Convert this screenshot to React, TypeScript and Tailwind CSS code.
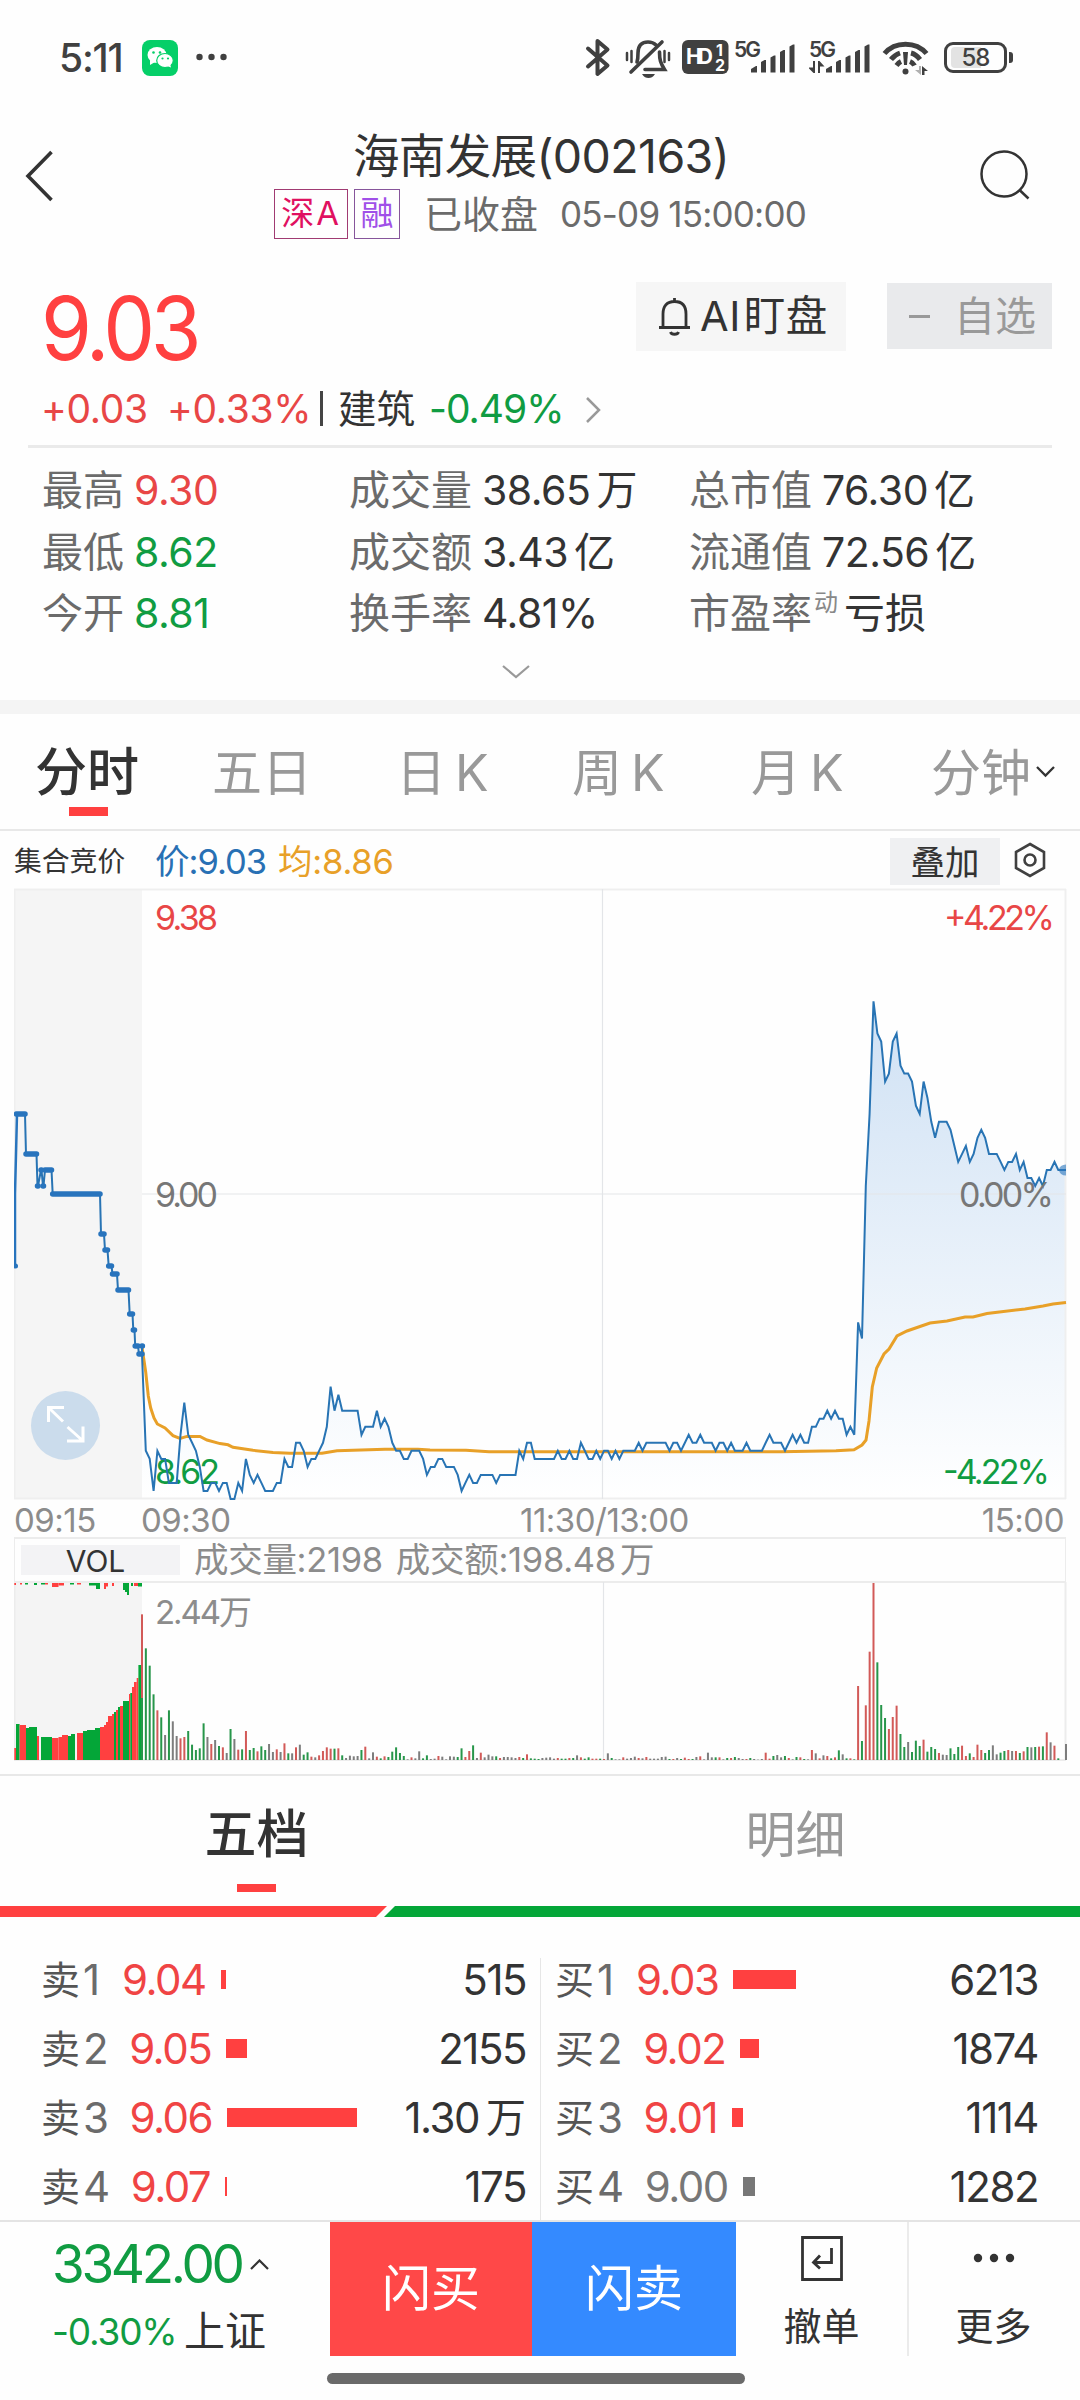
import React from 'react';

const RED = '#ff4040';
const GREEN = '#04a638';
const GRAY = '#777777';

// price per minute, in cents above the lower bound 8.62
const PRICES = [
  18, 6, 5, 1, 6, 5, 5, 2, 2, 2, 8, 12, 8, 7, 6, 4, 1, 1, 2, 2, 1, 2, 2, 0, 0, 2, 1, 5, 3, 2,
  3, 2, 1, 1, 1, 2, 2, 5, 4, 4, 7, 7, 6, 4, 5, 5, 6, 7, 9, 14, 11, 13, 11, 11, 11, 11, 11, 8, 9, 9,
  9, 11, 9, 10, 9, 7, 6, 6, 5, 5, 6, 6, 6, 5, 3, 4, 4, 5, 5, 4, 4, 4, 3, 1, 2, 3, 2, 2, 3, 3,
  3, 3, 2, 3, 3, 3, 3, 3, 6, 5, 7, 7, 5, 5, 5, 5, 5, 5, 6, 5, 5, 6, 5, 5, 7, 6, 5, 5, 6, 5,
  6, 6, 5, 6, 5, 6, 6, 6, 6, 7, 6, 7, 7, 7, 7, 7, 7, 6, 7, 7, 6, 7, 8, 7, 7, 8, 7, 7, 7, 6,
  7, 7, 6, 7, 6, 6, 6, 7, 6, 6, 6, 6, 7, 8, 7, 7, 7, 6, 7, 8, 7, 8, 7, 7, 9, 9, 10, 10, 11, 10,
  11, 10, 10, 8, 9, 8, 22, 20, 39, 48, 62, 58, 57, 52, 53, 57, 58, 54, 53, 53, 52, 49, 48, 52, 50, 47, 45, 47, 47, 47,
  46, 44, 42, 43, 44, 42, 43, 45, 46, 45, 43, 43, 43, 42, 41, 42, 42, 43, 41, 42, 40, 40, 39, 40, 39, 41, 41, 42, 41, 41, 41,
];

const AVERAGE =
  '142,1347 145.7,1372 148.3,1396 150.7,1408 154,1418 157.3,1424 165,1428 173,1435.6 180,1438.5 187,1436.4 200,1436.4 207,1440 220,1443.6 228,1444.8 233,1447.3 253,1450.3 273,1452.4 290,1453.2 322,1453.2 337,1450.7 385,1449.3 418,1449.3 430,1450 466,1450.3 489,1451.7 781,1451.7 836,1450.7 854,1449.7 862,1445 866,1440 869,1421 872.3,1387 876.7,1368 884,1354 889,1349 897,1336 907,1331 930,1323 947,1321 965,1317 973,1317 987,1313.5 1025,1309 1043,1306 1053,1304 1066,1302.5';

// call auction levels: [x start, x end, y]
const AUCTION: [number, number, number][] = [
  [16.5, 25, 1114],
  [26, 36.5, 1154],
  [37.5, 38, 1186],
  [41, 41.5, 1170],
  [43, 43.5, 1186],
  [45, 51.5, 1170],
  [52.7, 100, 1194],
  [101, 104, 1234],
  [105, 107.5, 1250],
  [108.7, 111.5, 1266],
  [112.5, 117, 1274],
  [118, 128.5, 1290],
  [129.7, 132.5, 1314],
  [133.3, 134.5, 1330],
  [135.2, 138, 1346],
  [139, 142, 1354],
  [142, 142.4, 1346],
];

// r = up, g = down, k = flat; number is the bar height in thirds of a pixel
const VOLUMES =
  'r437 g335 g283 g197 r149 g128 k75 g149 k116 k72 r65 r69 g87 g46 g30 g35 g110 k69 r48 k60 g42 r38 k21 g93 k63 r31 g32 r87 g30 g36 ' +
  'r26 g41 g30 k48 k24 r32 k24 r50 g20 k20 r38 k46 g16 g23 r10 k8 r14 r27 r38 r34 g34 r35 g14 k6 k13 k11 k12 g30 r40 k5 ' +
  'k23 r10 g5 r11 g9 g25 g38 g21 g12 k2 r8 k5 k26 g5 g14 k3 k4 r12 k10 k2 k11 k10 g9 g35 r9 r27 g44 k6 r22 k8 ' +
  'k16 k11 g11 r6 k9 k9 k8 k6 r9 g6 r17 g5 g4 g3 k6 k7 k8 k4 r6 g4 g4 r6 g6 k14 r8 g4 g8 r4 r4 g4 ' +
  'r3 k20 g6 k2 k2 r8 k4 k6 k10 r6 k5 r9 k4 k4 k4 k9 k10 g3 r3 k6 g3 r7 r3 g3 k9 r11 k2 k22 k8 g8 ' +
  'r8 k2 g6 r6 g9 k6 k3 r3 g6 k3 k1 k3 r22 r4 g12 k15 k8 g12 r6 k2 g9 r8 g3 k2 r30 k20 r5 k14 r12 g5 ' +
  'r8 g29 k17 g5 r5 g2 r222 g57 r164 r325 r531 g293 g165 g126 r93 r129 r163 g78 g39 k54 g24 g58 g42 r61 g25 g39 g33 r21 k16 k15 ' +
  'g35 g18 g39 r43 r12 g20 r9 r46 r30 g21 g30 k44 k17 g22 g27 r30 k27 r27 g21 r26 g39 k38 g39 r40 g41 r83 k53 r43 g5 k0 k48';

// [x start, x end, colour, height] of the call auction histogram
const AUCTION_VOL: [number, number, string, number][] = [
  [14.3, 16, 'r', 12], [16, 19.6, 'g', 36], [19.6, 26, 'r', 35], [26, 29, 'g', 32], [29, 37, 'g', 33], [37, 39, 'r', 24],
  [41, 45, 'g', 23], [45, 52, 'g', 23], [52, 58.5, 'r', 22], [58.5, 62, 'r', 23], [62, 68, 'r', 25], [68, 71, 'g', 24],
  [71, 75, 'g', 26], [77, 83, 'r', 27], [83, 87, 'g', 29], [87, 95, 'g', 30], [95, 100, 'g', 32], [100, 104, 'r', 33],
  [104, 106, 'r', 35], [106, 108, 'r', 38], [108, 112, 'r', 44], [112, 114, 'r', 46], [114, 116, 'g', 48], [116, 118, 'r', 50],
  [118, 120, 'g', 53], [120, 123, 'r', 54], [123, 129, 'g', 59], [129, 130.3, 'r', 66], [130.3, 132, 'g', 67], [132, 134, 'r', 73],
  [134, 136.7, 'r', 78], [136.7, 138.4, 'r', 82], [138.4, 141, 'g', 95],
];

const AUCTION_TOP: [number, number, string, number][] = [
  [14.3, 16, 'r', 2], [20, 22, 'r', 1.5], [25, 28, 'g', 1.5], [34, 37, 'g', 2], [41, 45, 'g', 1.5], [45, 48, 'r', 1.5],
  [52, 58.5, 'r', 4], [58.5, 64, 'r', 2.5], [70, 74, 'g', 1.5], [77, 81, 'r', 1.5], [89, 96, 'g', 2.5], [96, 100, 'g', 6],
  [104, 106, 'r', 6], [106, 108, 'r', 3.5], [112, 114, 'r', 3], [123, 125, 'g', 7], [125, 127, 'g', 9], [127, 129, 'g', 12],
  [131, 133, 'g', 3], [134, 138, 'r', 3], [138, 142, 'g', 3.5],
];

const minuteX = (i: number) => 142 + i * 3.85;
const priceY = (cents: number) => 1499 - cents * 8.026;

const volColor = (c: string) => (c === 'r' ? '#d25a58' : c === 'g' ? '#27964a' : '#7d7d7d');
const solidColor = (c: string) => (c === 'r' ? RED : GREEN);

const Signal: React.FC<{ arrows?: boolean }> = ({ arrows }) => (
  <svg width="62" height="40" viewBox="0 0 62 40" fill="#404040">
    <text x="0" y="19" fontSize="21" fontWeight="600" textLength="27" fontFamily="Inter">5G</text>
    <path d="M17 34.5V31l5-3h1v6.5z" />
    <path d="M27 34.5V24l3.5-2h1.5v12.5z" />
    <path d="M36.500 34.500V19.500l3.500-2h1.500v17z" />
    <path d="M46 34.500V14l3.500-2H51v22.500z" />
    <path d="M55.500 34.500V8.500L59 6.500h1.500v28z" />
    {arrows && <path d="M4 23h2v12H4.500L-1 29.500h5zM9 35V23h1.500l5 5.500H11V35z" />}
  </svg>
);

const StatusBar: React.FC = () => (
  <div className="flex h-[112px] items-start pt-[38px] pl-[59px] text-[#404040]">
    <span className="w-[83px] pt-px text-[39px] leading-[38px] font-medium tracking-[-1.200px]">5:11</span>
    <svg width="36" height="38" viewBox="0 0 36 38">
      <rect y="2" width="36" height="36" rx="8" fill="#05cf68" />
      <ellipse cx="15" cy="17" rx="9.500" ry="8" fill="#fff" />
      <path d="M8 22l0 5 5-3z" fill="#fff" />
      <ellipse cx="23" cy="22.500" rx="8.300" ry="7" fill="#fff" stroke="#05cf68" strokeWidth="1.200" />
      <path d="M25 28l4 1.500-1-4z" fill="#fff" />
      <circle cx="11.500" cy="14.500" r="1.300" fill="#05cf68" />
      <circle cx="18" cy="14.500" r="1.300" fill="#05cf68" />
      <circle cx="20.500" cy="20.500" r="1.100" fill="#05cf68" />
      <circle cx="26" cy="20.500" r="1.100" fill="#05cf68" />
    </svg>
    <svg className="ml-[17px]" width="34" height="38" viewBox="0 0 34 38" fill="#404040">
      <circle cx="4.500" cy="19" r="3.200" />
      <circle cx="16.500" cy="19" r="3.200" />
      <circle cx="28.500" cy="19" r="3.200" />
    </svg>
    <div className="ml-[356px] flex">
      <svg width="26" height="40" viewBox="0 0 26 40" fill="none" stroke="#404040" strokeWidth="4" strokeLinejoin="round" strokeLinecap="round">
        <path d="M3 10.500L22.500 27.500 12.500 36V3l10 8.500L3 28.500" />
      </svg>
      <svg className="ml-[14px]" width="46" height="42" viewBox="0 0 46 42" fill="none" stroke="#404040" strokeWidth="3.600" strokeLinecap="round">
        <path d="M12 24c1-3 1-5 1-9C13 7 17 4 23 4c3 0 6 1 8 3M34.500 14c0 8 1 11 5 17.500H20" />
        <path d="M37 4L6 34" />
        <path d="M17 36h13c-2 3-4 4-6.500 4S19 39 17 36z" fill="#404040" stroke="none" />
        <path d="M2 15v7M6.500 13v11M39.500 13v11M44 15v7" strokeWidth="2.500" />
      </svg>
      <svg className="ml-[11px]" width="47" height="40" viewBox="0 0 47 40">
        <rect y="2" width="46.500" height="34" rx="6" fill="#404040" />
        <text x="4" y="26" fontSize="21" fontWeight="700" fill="#fff" textLength="27" fontFamily="Inter">HD</text>
        <text x="34" y="17.500" fontSize="16" fontWeight="700" fill="#fff" fontFamily="Inter">1</text>
        <text x="33" y="33" fontSize="16" fontWeight="700" fill="#fff" fontFamily="Inter">2</text>
      </svg>
      <div className="ml-[5px] flex"><Signal /></div>
      <div className="ml-[13px] flex"><Signal arrows /></div>
      <svg className="ml-[11px]" width="47" height="40" viewBox="0 0 47 40" fill="none" stroke="#404040">
        <path d="M2.500 15.500C13 3 34 3 44.500 15.500" strokeWidth="5" />
        <path d="M9 21.500c3-4 6-5.500 9-6.500M29 15c4 1 6.500 3 9 6.500" strokeWidth="5" />
        <path d="M14.500 27.500c1.500-2 3-3.300 4.500-4M28 23.500c2 .800 3.500 2 4.500 4" strokeWidth="5" />
        <path d="M21 14h5l-1 13h-3z" fill="#404040" stroke="none" />
        <circle cx="23.500" cy="33.500" r="3" fill="#404040" stroke="none" />
        <path d="M37 28h2v9l-6-5h4z" fill="#b0b0b0" stroke="none" />
        <path d="M40 37v-9l6 5h-3.500v4z" fill="#404040" stroke="none" />
      </svg>
      <div className="relative ml-[15px] mt-1 flex h-[31px] w-[63px] items-center justify-center rounded-[9px] border-[3px] border-[#404040]">
        <div className="absolute left-[4px] top-[2px] h-[21px] w-[30px] rounded-l-[4px] bg-[#e3e3e3]" />
        <span className="relative text-[24px] leading-none font-medium tracking-[-1px]">58</span>
        <div className="absolute -right-[9px] top-[7px] h-[11px] w-[4px] rounded-r-[3px] bg-[#404040]" />
      </div>
    </div>
  </div>
);

const Header: React.FC = () => (
  <div className="flex h-[148px] pl-[24px] pr-[50px]">
    <svg className="mt-[38px]" width="30" height="52" viewBox="0 0 30 52" fill="none" stroke="#333" strokeWidth="3.600">
      <path d="M27.500 2L4 26l23.500 24" />
    </svg>
    <div className="flex flex-1 flex-col items-center pl-[46px]">
      <h1 className="mt-[18px] h-[52px] pl-[2px] text-[46.500px] leading-[52px] font-[380] tracking-[-0.600px] text-[#333]">海南发展(002163)</h1>
      <div className="mt-[7px] flex h-[50px] items-center text-[#6b6b6b]">
        <span className="mr-[6px] flex h-[50px] w-[74px] items-center justify-center border border-[#a03a72] text-[33px] tracking-[2px] text-[#e01060]">深A</span>
        <span className="flex h-[50px] w-[46px] items-center justify-center border border-[#86559b] text-[33px] text-[#a050e8]">融</span>
        <span className="ml-[24px] text-[38px]">已收盘</span>
        <span className="ml-[22px] text-[35px] tracking-[-0.800px]">05-09 15:00:00</span>
      </div>
    </div>
    <svg className="mt-[38px]" width="50" height="52" viewBox="0 0 50 52" fill="none" stroke="#333" strokeWidth="2.500">
      <circle cx="24" cy="24" r="22.500" />
      <path d="M39.500 40l9 8.500" />
    </svg>
  </div>
);

const Quote: React.FC = () => (
  <div className="h-[188px] px-[28px]">
    <div className="flex h-[110px] items-start pl-[13px]">
      <span className="mt-[24px] w-[595px] origin-left scale-x-[0.935] text-[88px] leading-[88px] font-[430] tracking-[-4.500px] text-[#ff4040]">9.03</span>
      <button className="mt-[22px] flex h-[69px] w-[210px] items-center bg-[#f6f6f6] pl-[22px] text-[#333]">
        <svg className="mr-[9px]" width="33" height="40" viewBox="0 0 33 40" fill="none" stroke="#333" strokeWidth="2.800">
          <path d="M1 30.500h31M5 30V17C5 9 9 4.500 16.500 4.500S28 9 28 17v13M16.500 1v4" />
          <path d="M12.500 35c1 3 7 3 8 0" />
        </svg>
        <span className="text-[41.500px] leading-none tracking-[0.500px]">AI<span className="ml-[3px]">盯盘</span></span>
      </button>
      <button className="ml-[41px] mt-[23px] flex h-[66px] w-[165px] items-center bg-[#e9eaec] pl-[22px] text-[#999]">
        <span className="mr-[24px] h-[3px] w-[21px] bg-[#999]" />
        <span className="text-[41px] leading-none">自选</span>
      </button>
    </div>
    <div className="mt-[16px] flex h-[59px] items-start pl-[13px] pt-px text-[39px] leading-[44px] tracking-[-0.300px]">
      <span className="w-[126px] text-[#e84646]">+0.03</span>
      <span className="w-[153px] text-[#e84646]">+0.33%</span>
      <span className="mt-[4px] h-[35px] w-[3px] bg-[#444]" />
      <span className="ml-[15px] w-[91px] text-[38.500px] tracking-normal text-[#333]">建筑</span>
      <span className="w-[156px] tracking-[-1px] text-[#109c42]">-0.49%</span>
      <svg className="mt-[10px]" width="16" height="26" viewBox="0 0 16 26" fill="none" stroke="#999" strokeWidth="2.500">
        <path d="M2 1l12 12L2 25" />
      </svg>
    </div>
    <div className="h-[3px] bg-[#eaeaea]" />
  </div>
);

type StatProps = { label: string; value: string; unit?: string; color?: string; sup?: string };

const Stat: React.FC<StatProps> = ({ label, value, unit, color = 'text-[#333]', sup }) => (
  <div className="flex h-[61.500px] items-center text-[41px] leading-none">
    <span className="text-[#6b6b6b]">{label}</span>
    {sup && <span className="mb-[22px] ml-[2px] text-[24px] text-[#888]">{sup}</span>}
    <span className={`${sup ? 'ml-[6px] tracking-normal' : 'ml-[10px] tracking-[-0.500px]'} ${color}`}>{value}</span>
    {unit && <span className={`ml-[6px] ${color}`}>{unit}</span>}
  </div>
);

const Stats: React.FC = () => (
  <div className="h-[252px]">
    <div className="grid grid-cols-[307px_340px_1fr] pl-[42px] pt-[12px]">
      <Stat label="最高" value="9.30" color="text-[#e84646]" />
      <Stat label="成交量" value="38.65" unit="万" />
      <Stat label="总市值" value="76.30" unit="亿" />
      <Stat label="最低" value="8.62" color="text-[#109c42]" />
      <Stat label="成交额" value="3.43" unit="亿" />
      <Stat label="流通值" value="72.56" unit="亿" />
      <Stat label="今开" value="8.81" color="text-[#109c42]" />
      <Stat label="换手率" value="4.81%" />
      <Stat label="市盈率" value="亏损" sup="动" />
    </div>
    <svg className="ml-[502px] mt-[20px]" width="28" height="14" viewBox="0 0 28 14" fill="none" stroke="#999" strokeWidth="2.200">
      <path d="M1 1l13 11L27 1" />
    </svg>
  </div>
);

const PeriodTabs: React.FC = () => (
  <div className="flex h-[117px] items-start border-b-2 border-[#e8e8e8] pl-[35px] pt-[31px] text-[50px] leading-[56px] text-[#999]">
    <div className="flex w-[177px] flex-col">
      <span className="text-[52px] font-medium text-[#333]">分时</span>
      <span className="ml-[34px] mt-[6px] h-[9px] w-[39px] bg-[#ff4040]" />
    </div>
    <span className="w-[184px]">五日</span>
    <span className="w-[176px] tracking-[9px]">日K</span>
    <span className="w-[179px] tracking-[9px]">周K</span>
    <span className="w-[180px] tracking-[9px]">月K</span>
    <span>分钟</span>
    <svg className="ml-[5px] mt-[21px]" width="19" height="12" viewBox="0 0 19 12" fill="none" stroke="#333" strokeWidth="2.300">
      <path d="M1 1l8.500 8.500L18 1" />
    </svg>
  </div>
);

const Legend: React.FC = () => (
  <div className="flex h-[57px] items-center pl-[14px] text-[34.500px] leading-none">
    <span className="w-[141px] pt-[4px] text-[27.800px] text-[#333]">集合竞价</span>
    <span className="w-[123px] pt-[5px] tracking-[-1px] text-[#2870b4]">价:9.03</span>
    <span className="w-[612px] pt-[5px] tracking-[-0.200px] text-[#e8a028]">均:8.86</span>
    <button className="mt-[3px] flex h-[47px] w-[110px] items-center justify-center bg-[#eff0f2] pt-[4px] leading-none text-[#333]">叠加</button>
    <svg className="ml-[13px]" width="34" height="36" viewBox="0 0 34 36" fill="none" stroke="#404040" strokeWidth="2.600">
      <path d="M17 2l14 8v16l-14 8-14-8V10z" />
      <circle cx="17" cy="18" r="5.500" />
    </svg>
  </div>
);

const PriceChart: React.FC = () => {
  const line = PRICES.map((c, i) => `${minuteX(i).toFixed(1)},${priceY(c).toFixed(1)}`).join(' ');
  const auctionLine = AUCTION.map(([x1, x2, y]) => `${x1},${y} ${x2},${y}`).join(' ');

  return (
    <svg className="ml-[14px] block" width="1053" height="612" viewBox="14 888 1053 612" fontFamily="Inter" fontSize="34">
      <defs>
        <linearGradient id="area" gradientUnits="userSpaceOnUse" x1="0" y1="1000" x2="0" y2="1499">
          <stop offset="0" stopColor="#cfe1f4" />
          <stop offset="1" stopColor="#ffffff" />
        </linearGradient>
      </defs>
      <rect x="14" y="889" width="128" height="610" fill="#f5f5f5" />
      <polygon points={`142,1499 ${line} 1066,1499`} fill="url(#area)" />
      <path d="M14.500 889V1499M1065.500 889V1499M14 889.500H1066M14 1498.500H1066" stroke="#efefef" strokeWidth="2" />
      <path d="M602.500 889V1499M142 1194H1066" stroke="#e3e5e8" strokeWidth="1.200" />
      <path d="M15 1266V1194L17 1114" fill="none" stroke="#2874bd" strokeWidth="2.500" />
      <circle cx="15.500" cy="1266" r="2.500" fill="#2874bd" />
      <polyline points={AVERAGE} fill="none" stroke="#e8a028" strokeWidth="3" />
      <text x="155" y="1484" fill="#109c42" textLength="65">8.62</text>
      <polyline points={line} fill="none" stroke="#2874b4" strokeWidth="2" />
      <polyline points={auctionLine} fill="none" stroke="#2874b4" strokeWidth="2" />
      {AUCTION.map(([x1, x2, y]) => (
        <path key={x1 + y} d={`M${x1} ${y}H${x2}`} stroke="#2874bd" strokeWidth="5.500" strokeLinecap="round" />
      ))}
      <path d="M1066 1164.500a7 5.500 0 0 0-7 5.500 7 5.500 0 0 0 7 5.500z" fill="#2874bd" opacity="0.600" />
      <text x="155" y="930" fill="#e84646" textLength="63">9.38</text>
      <text x="155" y="1207" fill={GRAY} textLength="63">9.00</text>
      <text x="944" y="930" fill="#e84646" textLength="111">+4.22%</text>
      <text x="959" y="1207" fill={GRAY} textLength="95">0.00%</text>
      <text x="943" y="1484" fill="#109c42" textLength="107">-4.22%</text>
      <circle cx="65.500" cy="1425.500" r="34.500" fill="#cbdcec" />
      <path d="M48.500 1422V1407.500H64M49 1408l14 13.500M83 1426.500V1441H67M82.500 1440.500l-15-13.500" fill="none" stroke="#fff" strokeWidth="3" />
    </svg>
  );
};

const VolumeChart: React.FC = () => (
  <svg className="ml-[14px] block" width="1053" height="180" viewBox="14 1581 1053 180" fontFamily="Inter, 'Noto Sans CJK SC'">
    <rect x="14" y="1582" width="128" height="178" fill="#f4f4f4" />
    <path d="M14.500 1582V1760M1065.500 1582V1760M14 1582H1066M14 1760H1066" stroke="#ececec" strokeWidth="2" />
    <path d="M603.500 1582V1760" stroke="#e3e5e8" strokeWidth="1.200" />
    {AUCTION_VOL.map(([x1, x2, c, h]) => (
      <rect key={x1} x={x1} y={1760 - h} width={x2 - x1} height={h} fill={solidColor(c)} />
    ))}
    {AUCTION_TOP.map(([x1, x2, c, h]) => (
      <rect key={x1} x={x1} y={1583} width={x2 - x1} height={h} fill={solidColor(c)} />
    ))}
    {VOLUMES.split(' ').map((v, i) => {
      const h = Number(v.slice(1)) / 3;
      return <rect key={i} x={minuteX(i) - 1} y={1760 - h} width="2" height={h} fill={volColor(v[0])} />;
    })}
    <rect x="141" y="1698" width="2" height="62" fill="#27964a" />
    <text x="155" y="1624" fontSize="33" fill="#8c8c8c" textLength="97">2.44万</text>
  </svg>
);

type Level = { side: string; n: number; price: string; bar: number; volume: string; unit?: string; flat?: boolean };

const SELLS: Level[] = [
  { side: '卖', n: 1, price: '9.04', bar: 5, volume: '515' },
  { side: '卖', n: 2, price: '9.05', bar: 21, volume: '2155' },
  { side: '卖', n: 3, price: '9.06', bar: 130, volume: '1.30', unit: '万' },
  { side: '卖', n: 4, price: '9.07', bar: 2, volume: '175' },
];

const BUYS: Level[] = [
  { side: '买', n: 1, price: '9.03', bar: 63, volume: '6213' },
  { side: '买', n: 2, price: '9.02', bar: 19, volume: '1874' },
  { side: '买', n: 3, price: '9.01', bar: 11, volume: '1114' },
  { side: '买', n: 4, price: '9.00', bar: 12, volume: '1282', flat: true },
];

const LevelRow: React.FC<{ level: Level }> = ({ level }) => (
  <div className="flex h-[69px] items-center text-[42px] leading-none tracking-[-1.500px]">
    <span className="text-[39px] tracking-normal text-[#555]">{level.side}</span>
    <span className="ml-[3px] min-w-[17px] text-[#6b6b6b]">{level.n}</span>
    <span className={`ml-[22px] ${level.flat ? 'text-[#777]' : 'text-[#f04444]'}`}>{level.price}</span>
    <span className={`ml-[15px] h-[19px] ${level.flat ? 'bg-[#777]' : 'bg-[#ff4040]'}`} style={{ width: level.bar }} />
    <span className="ml-auto text-[#333]">{level.volume}</span>
    {level.unit && <span className="ml-[7px] text-[40px] tracking-normal text-[#333]">{level.unit}</span>}
  </div>
);

const OrderBook: React.FC = () => (
  <div className="h-[446px] overflow-hidden border-t-2 border-[#e8e8e8]">
    <div className="grid h-[130px] grid-cols-2 pt-[31px] text-[50px] leading-[56px]">
      <div className="ml-[-27px] flex flex-col items-center">
        <span className="text-[52px] font-medium text-[#333]">五档</span>
        <span className="mt-[21px] h-[8px] w-[39px] bg-[#ff4040]" />
      </div>
      <span className="pr-[29px] text-center text-[#999]">明细</span>
    </div>
    <svg className="block" width="1080" height="11" viewBox="0 0 1080 11">
      <path d="M0 0H387L376 11H0z" fill={RED} />
      <path d="M395 0H1080V11H384z" fill={GREEN} />
    </svg>
    <div className="mt-[41px] grid grid-cols-[540px_1fr]">
      <div className="-mt-[13px] pl-[41px] pr-[14px]">
        {SELLS.map(l => <LevelRow key={l.n} level={l} />)}
      </div>
      <div className="border-l border-[#e6e6e6] pl-[14px] pr-[42px]">
        <div className="-mt-[13px]">
          {BUYS.map(l => <LevelRow key={l.n} level={l} />)}
        </div>
      </div>
    </div>
  </div>
);

const BottomBar: React.FC = () => (
  <div className="h-[180px] border-t-2 border-[#e4e4e4]">
    <div className="flex h-[134px] text-[#333]">
      <div className="w-[330px] pl-[52px] pt-[14px]">
        <div className="flex h-[56px] items-center">
          <span className="text-[53px] leading-none tracking-[-3.300px] text-[#109c42]">3342.00</span>
          <svg className="ml-[8px]" width="19" height="11" viewBox="0 0 19 11" fill="none" stroke="#333" strokeWidth="2.200">
            <path d="M1 10l8.500-8.500L18 10" />
          </svg>
        </div>
        <div className="mt-[17px] flex h-[44px] items-center leading-none">
          <span className="w-[132px] text-[37px] tracking-[-1.200px] text-[#109c42]">-0.30%</span>
          <span className="text-[41px]">上证</span>
        </div>
      </div>
      <button className="w-[202px] bg-[#ff4848] text-[49px] text-white">闪买</button>
      <button className="w-[204px] bg-[#348aff] text-[49px] text-white">闪卖</button>
      <div className="flex w-[173px] flex-col items-center border-r-2 border-[#ebebeb] pt-[14px]">
        <svg width="42" height="45" viewBox="0 0 42 45" fill="none" stroke="#333" strokeWidth="2.800">
          <path d="M1.500 1.500h39v42h-39zM30.500 12v14.500H13M19 19.500l-6.500 7 6.500 6" />
        </svg>
        <span className="mt-[23px] text-[38px] leading-[44px]">撤单</span>
      </div>
      <div className="flex flex-1 flex-col items-center pr-[2px] pt-[14px]">
        <svg width="42" height="45" viewBox="0 0 42 45" fill="#333">
          <circle cx="5" cy="22" r="4.200" />
          <circle cx="21" cy="22" r="4.200" />
          <circle cx="37" cy="22" r="4.200" />
        </svg>
        <span className="mt-[23px] text-[38px] leading-[44px]">更多</span>
      </div>
    </div>
    <div className="ml-[327px] mt-[17px] h-[11px] w-[418px] rounded-full bg-[#6a6a6a]" />
  </div>
);

export default function App() {
  return (
    <div className="h-[2400px] w-[1080px] overflow-hidden bg-[#fefefe] font-['Inter','Noto_Sans_CJK_SC',sans-serif] font-[370] whitespace-nowrap">
      <StatusBar />
      <Header />
      <Quote />
      <Stats />
      <div className="h-[14px] bg-[#f4f4f4]" />
      <PeriodTabs />
      <Legend />
      <PriceChart />
      <div className="flex h-[37px] items-center px-[14px] pt-[4px] text-[33px] leading-none tracking-[-0.500px] text-[#8c8c8c]">
        <span className="w-[127px]">09:15</span>
        <span className="w-[379px]">09:30</span>
        <span>11:30/13:00</span>
        <span className="ml-auto pr-[2px]">15:00</span>
      </div>
      <div className="mx-[14px] flex h-[44px] items-center border-x border-t-2 border-[#ececec] text-[34.500px] leading-none text-[#8c8c8c]">
        <span className="ml-[6px] flex h-[30px] w-[159px] items-center justify-center bg-[#f3f3f5] pr-[10px] pt-[2px] text-[30px] text-[#333]">VOL</span>
        <span className="ml-[14px] tracking-[-0.300px]">成交量:2198</span>
        <span className="ml-[13px] tracking-[-0.300px]">成交额:198.48<span className="ml-[4px]">万</span></span>
      </div>
      <VolumeChart />
      <div className="h-[13px]" />
      <OrderBook />
      <BottomBar />
    </div>
  );
}
